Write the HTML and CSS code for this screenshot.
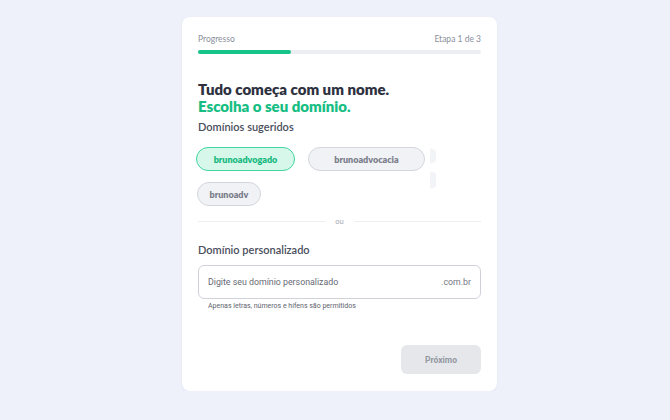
FILE: index.html
```html
<!DOCTYPE html>
<html lang="pt-BR">
<head>
    <meta charset="UTF-8">
    <title>Escolha o seu domínio</title>
    <link rel="stylesheet" href="styles.css">
</head>
<body>
<div class="card">
    <div class="progress">
        <div class="progress-head">
            <span>Progresso</span>
            <span>Etapa 1 de 3</span>
        </div>
        <div class="progress-bar"><div class="progress-fill" style="width: 33%"></div></div>
    </div>

    <h1 class="title">Tudo começa com um nome.<br><span class="accent">Escolha o seu domínio.</span></h1>
    <h2 class="section-label">Domínios sugeridos</h2>

    <div class="chips">
        <button class="chip selected">brunoadvogado</button>
        <button class="chip wide">brunoadvocacia</button>
        <span class="chip-ghost"></span>
        <button class="chip short">brunoadv</button>
    </div>

    <div class="divider"><span>ou</span></div>

    <h2 class="section-label custom">Domínio personalizado</h2>
    <div class="domain-input">
        <input type="text" placeholder="Digite seu domínio personalizado">
        <span class="suffix">.com.br</span>
    </div>
    <p class="hint">Apenas letras, números e hífens são permitidos</p>

    <div class="actions">
        <button class="next" disabled>Próximo</button>
    </div>
</div>
</body>
</html>
```

FILE: styles.css
```css
body {
    margin: 0;
    background-color: #eef0fa;
    font-family: "Lato", "Noto Sans", sans-serif;
    color: #2f3344;
}
.card {
    box-sizing: border-box;
    width: 315px;
    height: 374px;
    margin: 17px 0 0 182px;
    padding: 16px;
    background-color: #fff;
    border-radius: 8px;
    box-shadow: 0 1px 3px rgba(40, 50, 90, 0.05);
}
.progress-head {
    display: flex;
    justify-content: space-between;
    font-size: 8.5px;
    color: #8a8f9c;
    line-height: 12px;
}
.progress-bar {
    margin-top: 5px;
    height: 4px;
    border-radius: 2px;
    background-color: #eceef2;
}
.progress-fill {
    height: 100%;
    border-radius: 2px;
    background-color: #16c489;
}
.title {
    margin: 27px 0 0;
    font-size: 15px;
    line-height: 17px;
    font-weight: 800;
    color: #2e3140;
}
.accent {
    color: #17be84;
}
.section-label {
    margin: 4px 0 0;
    font-size: 11px;
    font-weight: 600;
    line-height: 16px;
    color: #4a4e5c;
}
.chips {
    margin: 12px 0 0 -2px;
    display: flex;
    flex-wrap: wrap;
    gap: 11px 13px;
    position: relative;
}
.chip {
    box-sizing: border-box;
    height: 24px;
    padding: 0;
    border: 1px solid #d3d6dd;
    border-radius: 12px;
    background-color: #f1f2f6;
    font-family: inherit;
    font-size: 9px;
    font-weight: 800;
    color: #7b7f8c;
}
.chip.selected {
    width: 99px;
    border-color: #3fd6a2;
    background-color: #d6f7ea;
    color: #16b97f;
}
.chip.wide {
    width: 117px;
}
.chip.short {
    width: 64px;
    margin-left: 1px;
}
.chip-ghost {
    position: absolute;
    left: 234px;
    top: 0;
    width: 6px;
    height: 42px;
    background:
        radial-gradient(circle at 0 9px, #f3f4f7 7px, transparent 8px),
        radial-gradient(circle at 0 33px, #f3f4f7 8px, transparent 9px);
}
.divider {
    margin-top: 11px;
    display: flex;
    align-items: center;
    gap: 10px;
    font-size: 7.5px;
    color: #a3a7b2;
}
.divider::before, .divider::after {
    content: "";
    flex: 1;
    height: 1px;
    background-color: #eceef2;
}
.section-label.custom {
    margin-top: 16px;
}
.domain-input {
    box-sizing: border-box;
    margin-top: 7px;
    height: 34px;
    border: 1px solid #cfd2d9;
    border-radius: 6px;
    display: flex;
    align-items: center;
    padding: 0 9px;
}
.domain-input input {
    flex: 1;
    border: none;
    outline: none;
    padding: 0;
    font-family: "Roboto", sans-serif;
    font-size: 8.8px;
    color: #333;
}
.domain-input input::placeholder {
    color: #666a74;
}
.suffix {
    font-family: "Roboto", sans-serif;
    font-size: 8.8px;
    color: #747884;
}
.hint {
    margin: 3px 0 0 10px;
    font-family: "Roboto", sans-serif;
    font-size: 7px;
    color: #60646e;
}
.actions {
    margin-top: 35px;
    display: flex;
    justify-content: flex-end;
}
.next {
    width: 80px;
    height: 29px;
    border: none;
    border-radius: 6px;
    background-color: #e5e7eb;
    font-family: "Roboto", sans-serif;
    font-size: 8.5px;
    font-weight: 700;
    color: #9397a2;
}
```
